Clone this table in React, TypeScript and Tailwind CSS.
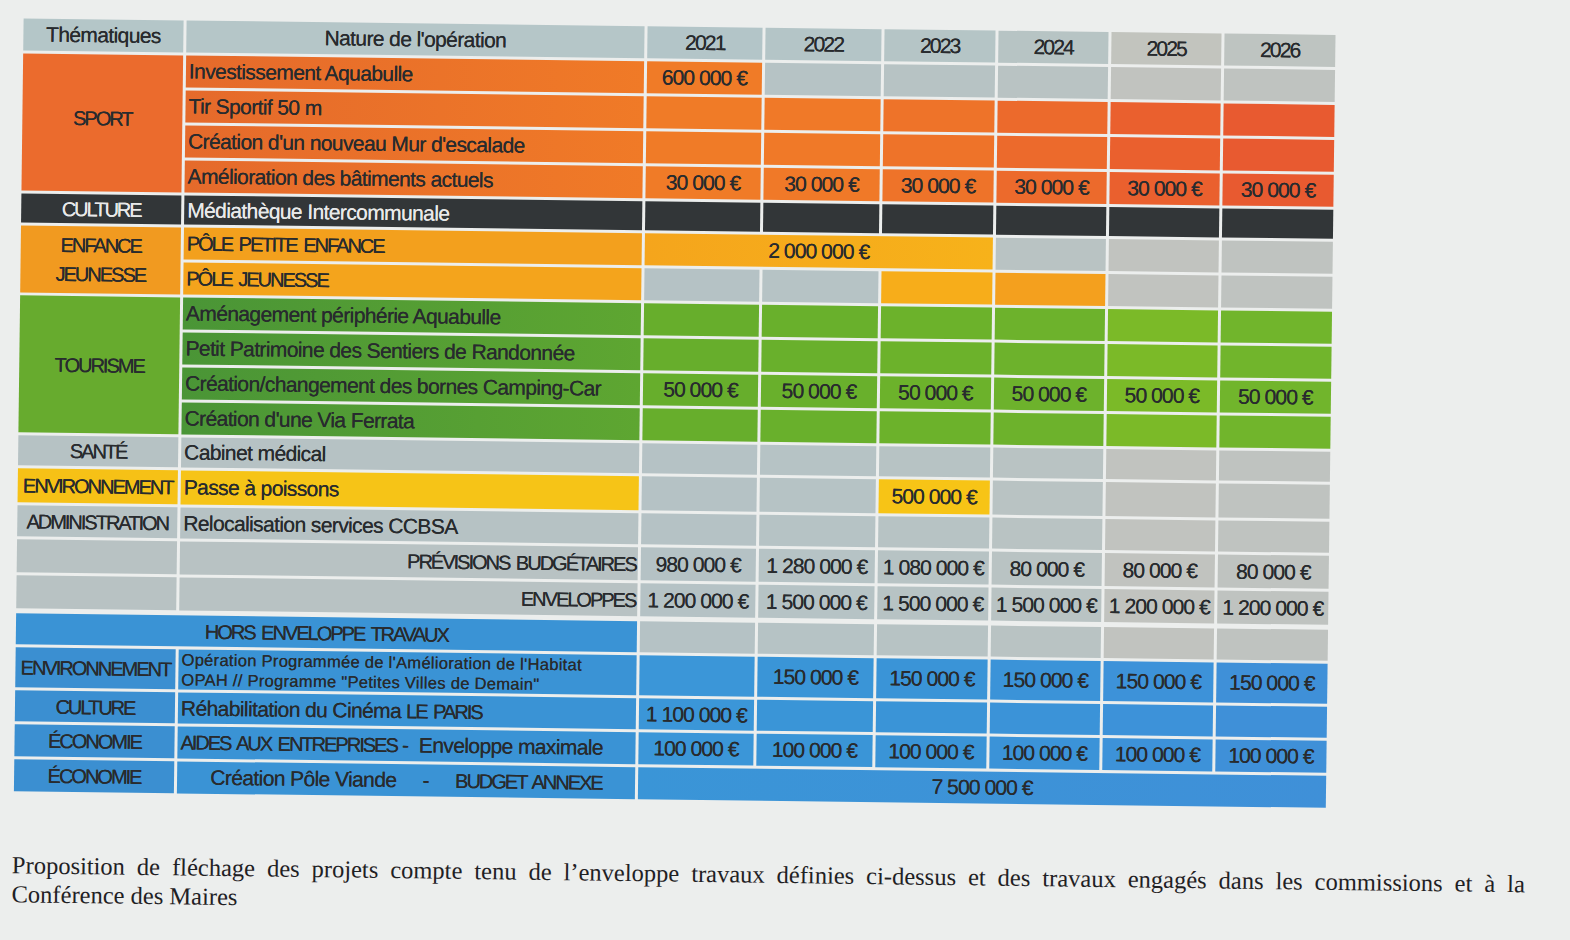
import type { ReactNode } from "react"

// year column backgrounds, 2021 → 2026
const HEAD = ["bg-[#b3c5c8]", "bg-[#b4c5c7]", "bg-[#b5c5c6]", "bg-[#b7c4c4]", "bg-[#c2c4be]", "bg-[#bec4c1]"]
const GRAY = ["bg-[#b5c2c5]", "bg-[#b6c3c5]", "bg-[#b7c3c4]", "bg-[#b9c3c3]", "bg-[#c1c3bf]", "bg-[#bfc3c0]"]
const ORANGE = ["bg-[#f07b27]", "bg-[#f07928]", "bg-[#ee7329]", "bg-[#ec6a2c]", "bg-[#ea602e]", "bg-[#e85a30]"]
const DARK = ["bg-[#323638]", "bg-[#323638]", "bg-[#323638]", "bg-[#323638]", "bg-[#323638]", "bg-[#323638]"]
const GREEN = ["bg-[#67ae2c]", "bg-[#69b02c]", "bg-[#6cb22b]", "bg-[#6db22c]", "bg-[#7bba28]", "bg-[#71b52c]"]
const BLUE = ["bg-[#3b96d8]", "bg-[#3a95d7]", "bg-[#3a94d7]", "bg-[#3b93d8]", "bg-[#3d92d9]", "bg-[#3f90d8]"]

const UC = "text-[20px] tracking-[-2px] [word-spacing:3px]"
const LC = "tracking-[-0.6px]"

function Cell({ className = "", children }: { className?: string; children?: ReactNode }) {
  return (
    <div className={`flex items-center overflow-hidden whitespace-nowrap ${className}`}>{children}</div>
  )
}

function Years({
  bg,
  values = [],
  className = "",
}: {
  bg: string[]
  values?: (string | undefined)[]
  className?: string
}) {
  return (
    <>
      {bg.map((b, i) => (
        <Cell key={i} className={`justify-center tracking-[-0.9px] ${b} ${className}`}>
          {values[i]}
        </Cell>
      ))}
    </>
  )
}

const thirty = ["30 000 €", "30 000 €", "30 000 €", "30 000 €", "30 000 €", "30 000 €"]
const fifty = ["50 000 €", "50 000 €", "50 000 €", "50 000 €", "50 000 €", "50 000 €"]

export default function App() {
  const sportNature = "pl-[3px] bg-linear-to-r from-[#e56a2b] to-[#f07a27]"
  const greenNature = "pl-[3px] bg-linear-to-r from-[#4a9536] to-[#5ea631]"

  return (
    <div className="w-[1570px] h-[940px] overflow-hidden bg-[#eceeed]">
      <div className="w-[1570px] h-[940px] rotate-[0.72deg] pt-[28px] pl-[18px]">
        <div className="grid grid-cols-[160px_458px_115px_116px_111px_110px_110px_111px] grid-rows-[32px_32px_32px_32px_32px_29px_32px_32px_32px_32px_32px_32px_30px_34px_31px_33px_33px_33px_40px_31px_32px_32px] gap-[3px] w-[1312px] font-['Liberation_Sans',Arial,sans-serif] text-[21px] text-[#282b2e] [text-shadow:0_0_0.6px_currentColor]">
          {/* header */}
          <Cell className={`justify-center bg-[#b4c6c8] ${LC}`}>Thématiques</Cell>
          <Cell className={`justify-center bg-[#b5c6c8] ${LC}`}>Nature de l'opération</Cell>
          {HEAD.map((b, i) => (
            <Cell key={i} className={`justify-center tracking-[-1.8px] ${b}`}>
              {2021 + i}
            </Cell>
          ))}

          {/* sport */}
          <Cell className={`row-span-4 justify-center pb-[10px] bg-[#eb6b2d] ${UC}`}>SPORT</Cell>
          <Cell className={`${sportNature} ${LC}`}>Investissement Aquabulle</Cell>
          <Years bg={[ORANGE[0], ...GRAY.slice(1)]} values={["600 000 €"]} />
          <Cell className={`${sportNature} ${LC}`}>Tir Sportif 50 m</Cell>
          <Years bg={ORANGE} />
          <Cell className={`${sportNature} ${LC}`}>Création d'un nouveau Mur d'escalade</Cell>
          <Years bg={ORANGE} />
          <Cell className={`${sportNature} ${LC}`}>Amélioration des bâtiments actuels</Cell>
          <Years bg={ORANGE} values={thirty} />

          {/* culture */}
          <Cell className={`justify-center bg-[#323638] text-[#e8e9e9] ${UC}`}>CULTURE</Cell>
          <Cell className={`pl-[3px] bg-[#323638] text-[#e8e9e9] ${LC}`}>Médiathèque Intercommunale</Cell>
          <Years bg={DARK} />

          {/* enfance jeunesse */}
          <Cell className={`row-span-2 flex-col justify-center leading-[29px] bg-[#f19a20] ${UC}`}>
            <span>ENFANCE</span>
            <span>JEUNESSE</span>
          </Cell>
          <Cell className={`pl-[3px] bg-[#f3a01d] ${UC}`}>PÔLE PETITE ENFANCE</Cell>
          <Cell className="col-span-3 justify-center tracking-[-0.9px] bg-linear-to-r from-[#f5a51c] to-[#f7b21a]">
            2 000 000 €
          </Cell>
          <Years bg={GRAY.slice(3)} />
          <Cell className={`pl-[3px] bg-[#f4a41c] ${UC}`}>PÔLE JEUNESSE</Cell>
          <Years bg={[GRAY[0], GRAY[1], "bg-[#f7ad1a]", "bg-[#f4a01e]", GRAY[4], GRAY[5]]} />

          {/* tourisme */}
          <Cell className={`row-span-4 justify-center bg-[#67ab2e] ${UC}`}>TOURISME</Cell>
          <Cell className={`${greenNature} ${LC}`}>Aménagement périphérie Aquabulle</Cell>
          <Years bg={GREEN} />
          <Cell className={`${greenNature} ${LC}`}>Petit Patrimoine des Sentiers de Randonnée</Cell>
          <Years bg={GREEN} />
          <Cell className={`${greenNature} ${LC}`}>Création/changement des bornes Camping-Car</Cell>
          <Years bg={GREEN} values={fifty} />
          <Cell className={`${greenNature} ${LC}`}>Création d'une Via Ferrata</Cell>
          <Years bg={GREEN} />

          {/* santé / environnement / administration */}
          <Cell className={`justify-center bg-[#b6c2c4] ${UC}`}>SANTÉ</Cell>
          <Cell className={`pl-[3px] bg-[#b6c2c4] ${LC}`}>Cabinet médical</Cell>
          <Years bg={GRAY} />
          <Cell className={`justify-center bg-[#f6c116] ${UC}`}>ENVIRONNEMENT</Cell>
          <Cell className={`pl-[3px] bg-[#f6c417] ${LC}`}>Passe à poissons</Cell>
          <Years
            bg={[GRAY[0], GRAY[1], "bg-[#f7c416]", GRAY[3], GRAY[4], GRAY[5]]}
            values={[undefined, undefined, "500 000 €"]}
          />
          <Cell className={`justify-center bg-[#b6c2c4] ${UC}`}>ADMINISTRATION</Cell>
          <Cell className={`pl-[3px] bg-[#b6c2c4] ${LC}`}>Relocalisation services CCBSA</Cell>
          <Years bg={GRAY} />

          {/* totaux */}
          <Cell className="bg-[#b8c2c3]" />
          <Cell className={`justify-end pr-[2px] bg-[#b8c2c3] ${UC}`}>PRÉVISIONS BUDGÉTAIRES</Cell>
          <Years
            bg={GRAY}
            values={["980 000 €", "1 280 000 €", "1 080 000 €", "80 000 €", "80 000 €", "80 000 €"]}
          />
          <Cell className="bg-[#b8c2c3]" />
          <Cell className={`justify-end pr-[2px] bg-[#b8c2c3] ${UC}`}>ENVELOPPES</Cell>
          <Years
            bg={GRAY}
            values={["1 200 000 €", "1 500 000 €", "1 500 000 €", "1 500 000 €", "1 200 000 €", "1 200 000 €"]}
          />

          {/* hors enveloppe */}
          <Cell className={`col-span-2 mt-[2px] justify-center bg-[#3a93d5] ${UC}`}>HORS ENVELOPPE TRAVAUX</Cell>
          <Years bg={GRAY} className="mt-[2px]" />

          <Cell className={`justify-center bg-[#3b8fd1] ${UC}`}>ENVIRONNEMENT</Cell>
          <Cell className="flex-col !items-start justify-center pl-[3px] bg-[#3a93d5] text-[16.5px] leading-[20px] tracking-[0.3px]">
            <span>Opération Programmée de l'Amélioration de l'Habitat</span>
            <span>OPAH // Programme "Petites Villes de Demain"</span>
          </Cell>
          <Years bg={BLUE} values={[undefined, "150 000 €", "150 000 €", "150 000 €", "150 000 €", "150 000 €"]} />

          <Cell className={`justify-center bg-[#3b8fd1] ${UC}`}>CULTURE</Cell>
          <Cell className={`pl-[3px] bg-[#3a93d5] ${LC}`}>
            Réhabilitation du Cinéma <span className={`ml-[5px] ${UC}`}>LE PARIS</span>
          </Cell>
          <Years bg={BLUE} values={["1 100 000 €"]} />

          <Cell className={`justify-center bg-[#3b8fd1] ${UC}`}>ÉCONOMIE</Cell>
          <Cell className={`pl-[3px] bg-[#3a93d5] whitespace-pre ${LC}`}>
            <span className={UC}>AIDES AUX ENTREPRISES</span> -  Enveloppe maximale
          </Cell>
          <Years
            bg={BLUE}
            values={["100 000 €", "100 000 €", "100 000 €", "100 000 €", "100 000 €", "100 000 €"]}
          />

          <Cell className={`justify-center bg-[#3b8fd1] ${UC}`}>ÉCONOMIE</Cell>
          <Cell className={`justify-center bg-[#3a93d5] whitespace-pre ${LC}`}>
            Création Pôle Viande     -     <span className={UC}>BUDGET ANNEXE</span>
          </Cell>
          <Cell className="col-span-6 justify-center tracking-[-0.9px] bg-linear-to-r from-[#3a95d7] to-[#3f90d8]">
            7 500 000 €
          </Cell>
        </div>

        {/* légende */}
        <div className="mt-[60px] -ml-[1px] w-[1513px] font-['Liberation_Serif','Times_New_Roman',serif] text-[24.5px] leading-[28.5px] text-[#1f2124]">
          <p className="text-justify [text-align-last:justify]">
            Proposition de fléchage des projets compte tenu de l’enveloppe travaux définies ci-dessus et des
            travaux engagés dans les commissions et à la
          </p>
          <p>Conférence des Maires</p>
        </div>
      </div>
    </div>
  )
}
